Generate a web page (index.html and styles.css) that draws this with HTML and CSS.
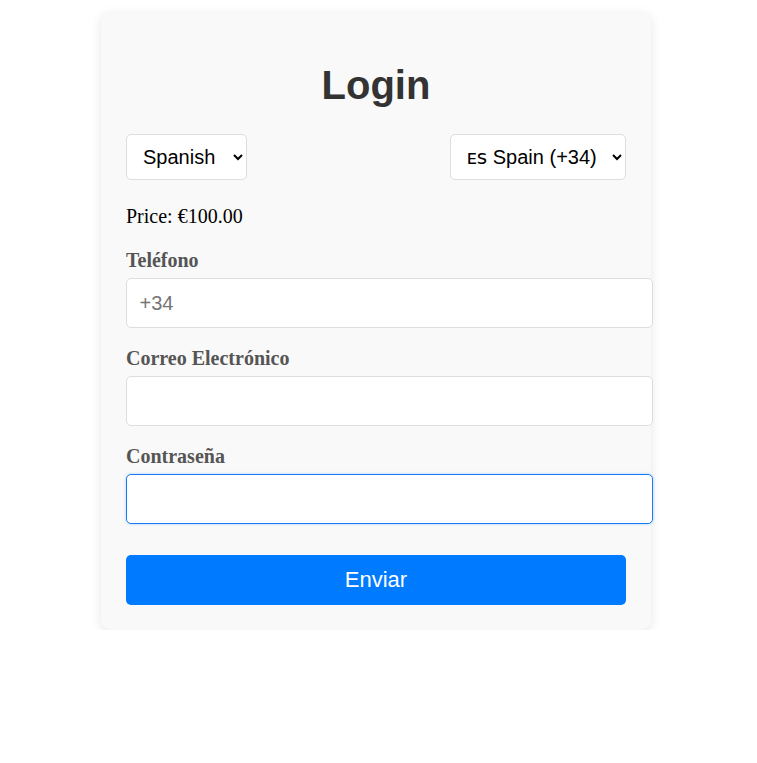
FILE: index.html
```html
<!DOCTYPE html>
<html lang="es">
<head>
<meta charset="utf-8">
<title>Login</title>
<link rel="stylesheet" href="styles.css">
</head>
<body>
<div class="card">
  <h1 class="title">Login</h1>
  <div class="select-row">
    <select class="select select-lang">
      <option>Spanish</option>
      <option>English</option>
    </select>
    <select class="select">
      <option>ᴇꜱ Spain (+34)</option>
      <option>ᴜꜱ USA (+1)</option>
    </select>
  </div>
  <p class="price">Price: €100.00</p>
  <form class="form">
    <div class="group">
      <label class="label">Teléfono</label>
      <input class="input" type="tel" placeholder="+34">
    </div>
    <div class="group">
      <label class="label">Correo Electrónico</label>
      <input class="input" type="email">
    </div>
    <div class="group">
      <label class="label">Contraseña</label>
      <input class="input input-focus" type="password">
    </div>
    <button class="button" type="button">Enviar</button>
  </form>
</div>
</body>
</html>
```
FILE: styles.css
```css
html, body {
  margin: 0;
  padding: 0;
  background: #ffffff;
}

body {
  font-family: "Liberation Serif", "Times New Roman", serif;
  font-size: 20px;
  color: #000;
}

.card {
  box-sizing: border-box;
  width: 550px;
  margin: 13px 0 0 101px;
  padding: 25px;
  background: #f9f9f9;
  border-radius: 10px;
  box-shadow: 0 2px 12px rgba(0, 0, 0, 0.1);
}

.title {
  margin: 25px 0 26px;
  font-family: "Liberation Sans", Arial, sans-serif;
  font-size: 40px;
  font-weight: bold;
  color: #333;
  text-align: center;
}

.select-row {
  display: flex;
  justify-content: space-between;
  margin-bottom: 25px;
}

.select {
  height: 46px;
  padding: 10px 12px 10px 12px;
  font-family: "Liberation Sans", "DejaVu Sans", Arial, sans-serif;
  font-size: 20px;
  color: #000;
  background: #fff;
  border: 1px solid #ddd;
  border-radius: 5px;
}

.select-lang {
  padding-right: 14px;
}

.price {
  margin: 0 0 21px;
  font-size: 20px;
}

.group {
  margin-bottom: 18.75px;
}

.label {
  display: block;
  margin-bottom: 6.25px;
  font-weight: bold;
  color: #555;
}

.input {
  display: block;
  box-sizing: content-box;
  width: 100%;
  height: 23px;
  padding: 12.5px;
  font-family: "Liberation Sans", Arial, sans-serif;
  font-size: 20px;
  border: 1px solid #ddd;
  border-radius: 5px;
  background: #fff;
  outline: none;
}

.input::placeholder {
  color: #757575;
}

.input-focus {
  border-color: #1a7cf5;
  box-shadow: 0 0 3px rgba(0, 123, 255, 0.35);
}

.button {
  display: block;
  width: 100%;
  height: 50px;
  margin-top: 31px;
  font-family: "Liberation Sans", Arial, sans-serif;
  font-size: 22px;
  color: #fff;
  background: #007bff;
  border: none;
  border-radius: 5px;
}
```
